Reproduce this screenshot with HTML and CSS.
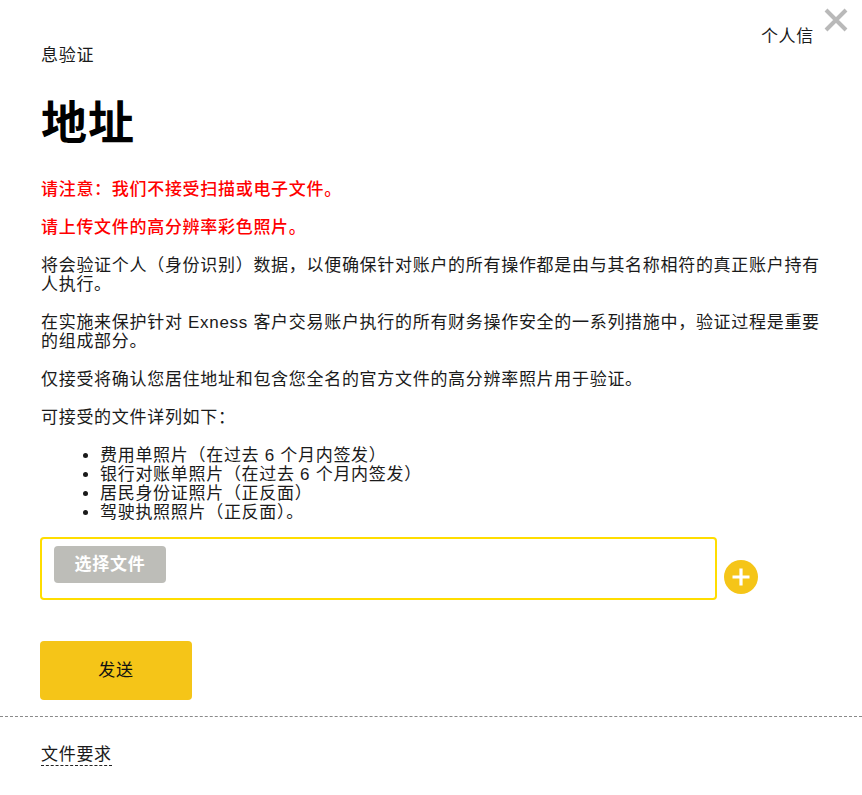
FILE: index.html
```html
<!DOCTYPE html>
<html lang="zh-CN">
<head>
<meta charset="utf-8">
<title>个人信息验证 - 地址</title>
<link rel="stylesheet" href="styles.css">
</head>
<body>
<div class="modal">
  <button class="close" aria-label="关闭">
    <svg width="24" height="24" viewBox="0 0 24 24"><path d="M2 2 L22 22 M22 2 L2 22" stroke="#b9b9b9" stroke-width="4" fill="none"/></svg>
  </button>
  <div class="content">
    <div class="crumb-right">个人信</div>
    <div class="crumb-left">息验证</div>
    <h1 class="title">地址</h1>
    <p class="warn">请注意：我们不接受扫描或电子文件。</p>
    <p class="warn">请上传文件的高分辨率彩色照片。</p>
    <p class="text">将会验证个人（身份识别）数据，以便确保针对账户的所有操作都是由与其名称相符的真正账户持有人执行。</p>
    <p class="text">在实施来保护针对 Exness 客户交易账户执行的所有财务操作安全的一系列措施中，验证过程是重要的组成部分。</p>
    <p class="text">仅接受将确认您居住地址和包含您全名的官方文件的高分辨率照片用于验证。</p>
    <p class="text">可接受的文件详列如下：</p>
    <ul class="docs">
      <li>费用单照片（在过去 6 个月内签发）</li>
      <li>银行对账单照片（在过去 6 个月内签发）</li>
      <li>居民身份证照片（正反面）</li>
      <li>驾驶执照照片（正反面）。</li>
    </ul>
    <div class="upload-row">
      <div class="upload-box">
        <span class="choose">选择文件</span>
      </div>
      <span class="add" aria-label="添加">
        <svg width="34" height="34" viewBox="0 0 34 34"><circle cx="17" cy="17" r="17" fill="#f5c518"/><path d="M17 8.5 V25.5 M8.5 17 H25.5" stroke="#fff" stroke-width="3.2" fill="none"/></svg>
      </span>
    </div>
    <button class="send">发送</button>
  </div>
  <div class="divider"></div>
  <div class="footer">
    <span class="req">文件要求</span>
  </div>
</div>
</body>
</html>
```
FILE: styles.css
```css
html, body {
  margin: 0;
  padding: 0;
  background: #fff;
}
body {
  font-family: "Liberation Sans", "Noto Sans CJK SC", sans-serif;
  color: #1a1a1a;
  font-size: 17px;
  line-height: 19px;
  letter-spacing: 0.7px;
}
.modal {
  position: relative;
  width: 862px;
  min-height: 795px;
}
.close {
  position: absolute;
  top: 8px;
  right: 14px;
  width: 24px;
  height: 24px;
  padding: 0;
  border: 0;
  background: none;
  cursor: pointer;
}
.close svg { display: block; }
.content {
  padding: 27px 21px 0 41px;
}
.crumb-right {
  text-align: right;
  padding-right: 27px;
}
.crumb-left {
  margin: 0;
}
.title {
  margin: 31px 0 30px;
  font-size: 46px;
  line-height: 54px;
  font-weight: bold;
  letter-spacing: 1px;
  color: #000;
}
p {
  margin: 0 0 19px;
}
.warn {
  color: #ff0000;
  font-weight: 500;
}
.text {
  width: 788px;
}
.docs {
  margin: 18px 0 0;
  padding-left: 59px;
}
.upload-row {
  display: flex;
  align-items: flex-start;
  gap: 7px;
  margin-top: 15px;
}
.upload-box {
  box-sizing: border-box;
  width: 677px;
  height: 63px;
  border: 2px solid #ffdd00;
  border-radius: 4px;
  padding: 7px 12px;
  margin-left: -1px;
}
.choose {
  display: inline-flex;
  align-items: center;
  justify-content: center;
  width: 112px;
  height: 37px;
  background: #bdbdb8;
  color: #fff;
  font-weight: bold;
  border-radius: 4px;
}
.add {
  display: block;
  margin-top: 23px;
}
.add svg { display: block; }
.send {
  display: block;
  margin: 41px 0 0 -1px;
  width: 152px;
  height: 59px;
  border: 0;
  border-radius: 4px;
  background: #f5c518;
  color: #111;
  font: inherit;
  letter-spacing: 0.7px;
  cursor: pointer;
}
.divider {
  margin-top: 16px;
  border-top: 1px dashed #8a8a8a;
}
.footer {
  padding: 28px 41px 0;
}
.req {
  border-bottom: 1px dashed #222;
  padding-bottom: 1px;
}
```
